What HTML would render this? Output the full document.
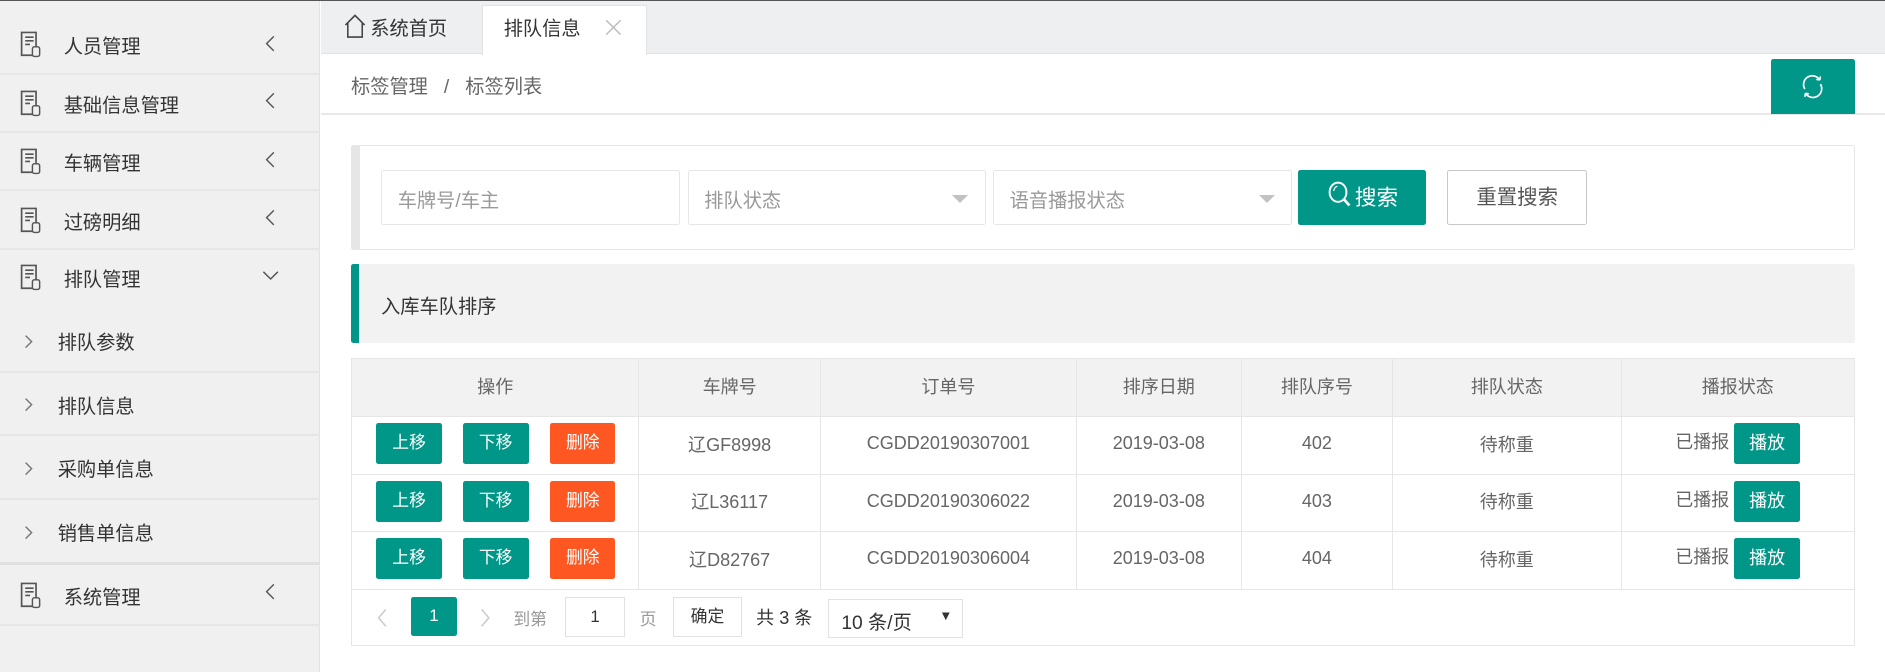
<!DOCTYPE html>
<html><head><meta charset="utf-8">
<style>
*{box-sizing:border-box;margin:0;padding:0}
html,body{width:1885px;height:672px;overflow:hidden;background:#fff}
#w{zoom:1.2022;width:1568px;height:559px;position:relative;font-family:"Liberation Sans","Noto Sans CJK SC",sans-serif;color:#333;font-size:15px}
.a{position:absolute}
.side{left:0;top:1px;width:266px;height:558px;background:#f0f0f0;border-right:1px solid #e2e2e2}
.it{position:absolute;left:0;width:266px;border-bottom:2px solid #e6e6e6;font-size:16px;color:#333}
.it span{position:absolute;left:53px}
.it .ch{position:absolute;left:219px}
.ic{position:absolute;left:15px;width:20px;height:24px}
.sub span{left:48px}
.sub .ch{left:18px}
.inp{border:1px solid #e6e6e6;background:#fff;height:46px;top:141px;color:#999;padding:12px 0 0 13px;font-size:16px;border-radius:2px}
.tri{position:absolute;right:14px;top:20px;border:7px solid transparent;border-top:7px solid #c2c2c2}
.btn{color:#fff;background:#009688;text-align:center;border-radius:2px}
table{border-collapse:collapse;position:absolute;left:292px;top:298px;width:1251px;color:#666;font-size:15px}
td,th{border:1px solid #e6e6e6;text-align:center;font-weight:normal;height:48px;padding:0 0 3px 0}
th{background:#f2f2f2}
.sb{display:inline-block;width:55px;height:34px;line-height:34px;color:#fff;background:#009688;font-size:14px;border-radius:2px;margin:0 7px;text-align:center;vertical-align:middle}
.del{background:#ff5722;width:54px}
</style></head><body><div id="w">
<div class="a" style="left:0;top:0;width:1568px;height:1px;background:#555"></div>
<svg width="0" height="0" style="position:absolute"><defs>
<g id="doc"><path d="M3 2h12v19H3z M6 6h7 M6 9h7 M6 12h4" fill="none" stroke="#555" stroke-width="1.4"/><rect x="12" y="14" width="6" height="8" rx="1.5" fill="#f0f0f0" stroke="#555" stroke-width="1.2"/></g>
<path id="lt" d="M9 2L3 8l6 6" fill="none" stroke="#555" stroke-width="1.2"/>
<path id="dn" d="M2 4l6 6 6-6" fill="none" stroke="#555" stroke-width="1.2"/>
<path id="rt" d="M3 3l5 5-5 5" fill="none" stroke="#777" stroke-width="1.2"/>
</defs></svg>
<div class="a side">
<div class="it" style="top:13px;height:48px"><svg class="ic" style="top:11px"><use href="#doc"/></svg><span style="top:12px">人员管理</span><svg class="ch" width="12" height="16" style="top:14px"><use href="#lt"/></svg></div>
<div class="it" style="top:61px;height:49px"><svg class="ic" style="top:12px"><use href="#doc"/></svg><span style="top:13px">基础信息管理</span><svg class="ch" width="12" height="16" style="top:14px"><use href="#lt"/></svg></div>
<div class="it" style="top:110px;height:48px"><svg class="ic" style="top:11px"><use href="#doc"/></svg><span style="top:12px">车辆管理</span><svg class="ch" width="12" height="16" style="top:14px"><use href="#lt"/></svg></div>
<div class="it" style="top:158px;height:49px"><svg class="ic" style="top:12px"><use href="#doc"/></svg><span style="top:13px">过磅明细</span><svg class="ch" width="12" height="16" style="top:14px"><use href="#lt"/></svg></div>
<div class="it" style="top:207px;height:50px;border:none"><svg class="ic" style="top:11px"><use href="#doc"/></svg><span style="top:12px">排队管理</span><svg class="ch" width="16" height="14" style="top:14px;left:217px"><use href="#dn"/></svg></div>
<div class="it sub" style="top:257px;height:52px"><svg class="ch" width="12" height="16" style="top:18px"><use href="#rt"/></svg><span style="top:14px">排队参数</span></div>
<div class="it sub" style="top:309px;height:53px"><svg class="ch" width="12" height="16" style="top:19px"><use href="#rt"/></svg><span style="top:15px">排队信息</span></div>
<div class="it sub" style="top:362px;height:53px"><svg class="ch" width="12" height="16" style="top:19px"><use href="#rt"/></svg><span style="top:15px">采购单信息</span></div>
<div class="it sub" style="top:415px;height:54px;border-bottom:3px solid #e0e0e0"><svg class="ch" width="12" height="16" style="top:19px"><use href="#rt"/></svg><span style="top:15px">销售单信息</span></div>
<div class="it" style="top:469px;height:51px"><svg class="ic" style="top:13px"><use href="#doc"/></svg><span style="top:14px">系统管理</span><svg class="ch" width="12" height="16" style="top:14px"><use href="#lt"/></svg></div>
</div>
<div class="a" style="left:267px;top:1px;width:1301px;height:44px;background:#eeeff1;border-bottom:1px solid #e2e2e2"></div>
<svg class="a" style="left:285px;top:11px" width="20" height="22"><path d="M2 10L10 2l8 8M4 8v12h12V8" fill="none" stroke="#444" stroke-width="1.3"/></svg>
<div class="a" style="left:308px;top:11px;font-size:16px">系统首页</div>
<div class="a" style="left:401px;top:4px;width:137px;height:42px;background:#fff;border:1px solid #e2e2e2;border-bottom:none"></div>
<div class="a" style="left:419px;top:11px;font-size:16px">排队信息</div>
<svg class="a" style="left:503px;top:16px" width="14" height="14"><path d="M1 1l12 12M13 1L1 13" stroke="#bbb" stroke-width="1.2"/></svg>
<div class="a" style="left:267px;top:94px;width:1301px;height:2px;background:#e8e8e8"></div>
<div class="a" style="left:292px;top:59px;color:#666;font-size:16px">标签管理&nbsp;&nbsp;&nbsp;/&nbsp;&nbsp;&nbsp;标签列表</div>
<div class="a btn" style="left:1473px;top:49px;width:70px;height:46px;border-radius:2px 2px 0 0">
<svg width="26" height="26" style="margin-top:10px"><path d="M6.5 15A7 7 0 0 1 19 7.5M19.5 11A7 7 0 0 1 7 18.5" fill="none" stroke="#fff" stroke-width="1.4"/><path d="M19 7.5l0.5-3M19 7.5l-3-0.5M7 18.5l-0.5 3M7 18.5l3 0.5" stroke="#fff" stroke-width="1.3"/></svg></div>
<div class="a" style="left:292px;top:121px;width:1251px;height:87px;border:1px solid #e6e6e6;border-left:8px solid #e6e6e6;border-radius:2px"></div>
<div class="a inp" style="left:317px;width:249px">车牌号/车主</div>
<div class="a inp" style="left:572px;width:248px">排队状态<div class="tri"></div></div>
<div class="a inp" style="left:826px;width:249px">语音播报状态<div class="tri"></div></div>
<div class="a btn" style="left:1080px;top:141px;width:106px;height:46px;font-size:18px;line-height:46px"><svg width="24" height="26" style="vertical-align:-5px"><ellipse cx="10" cy="11" rx="7" ry="8" fill="none" stroke="#fff" stroke-width="1.6"/><path d="M15 17l4.5 5" stroke="#fff" stroke-width="2.2"/><path d="M6.5 10a4 4 0 0 1 3-4" stroke="#fff" fill="none" stroke-width="1"/></svg>搜索</div>
<div class="a" style="left:1204px;top:141px;width:116px;height:46px;border:1px solid #c9c9c9;border-radius:2px;text-align:center;line-height:46px;font-size:17px;color:#555">重置搜索</div>
<div class="a" style="left:292px;top:220px;width:1251px;height:65px;background:#f2f2f2;border-left:7px solid #009688;border-radius:2px"></div>
<div class="a" style="left:317px;top:242px;font-size:16px">入库车队排序</div>
<table>
<tr><th style="width:239px">操作</th><th style="width:151px">车牌号</th><th style="width:213px">订单号</th><th style="width:137px">排序日期</th><th style="width:126px">排队序号</th><th style="width:190px">排队状态</th><th>播报状态</th></tr>
<tr><td style="text-align:left;padding-left:13px"><span class="sb">上移</span><span class="sb" style="margin-left:10px">下移</span><span class="sb del" style="margin-left:11px">删除</span></td><td>辽GF8998</td><td>CGDD20190307001</td><td>2019-03-08</td><td>402</td><td>待称重</td><td>已播报<span class="sb" style="margin:0 0 0 4px;font-size:15px">播放</span></td></tr>
<tr><td style="text-align:left;padding-left:13px"><span class="sb">上移</span><span class="sb" style="margin-left:10px">下移</span><span class="sb del" style="margin-left:11px">删除</span></td><td>辽L36117</td><td>CGDD20190306022</td><td>2019-03-08</td><td>403</td><td>待称重</td><td>已播报<span class="sb" style="margin:0 0 0 4px;font-size:15px">播放</span></td></tr>
<tr><td style="text-align:left;padding-left:13px"><span class="sb">上移</span><span class="sb" style="margin-left:10px">下移</span><span class="sb del" style="margin-left:11px">删除</span></td><td>辽D82767</td><td>CGDD20190306004</td><td>2019-03-08</td><td>404</td><td>待称重</td><td>已播报<span class="sb" style="margin:0 0 0 4px;font-size:15px">播放</span></td></tr>
</table>
<div class="a" style="left:292px;top:488px;width:1251px;height:49px;border:1px solid #e6e6e6;border-top:none"></div>
<svg class="a" style="left:312px;top:505px" width="12" height="18"><path d="M9 2L3 9l6 7" fill="none" stroke="#ccc" stroke-width="1.3"/></svg>
<div class="a btn" style="left:342px;top:497px;width:38px;height:32px;line-height:32px;font-size:14px">1</div>
<svg class="a" style="left:398px;top:505px" width="12" height="18"><path d="M3 2l6 7-6 7" fill="none" stroke="#ccc" stroke-width="1.3"/></svg>
<div class="a" style="left:427px;top:503px;font-size:14px;color:#999">到第</div>
<div class="a" style="left:470px;top:497px;width:50px;height:33px;border:1px solid #e2e2e2;text-align:center;line-height:31px;font-size:14px">1</div>
<div class="a" style="left:532px;top:503px;font-size:14px;color:#999">页</div>
<div class="a" style="left:560px;top:497px;width:57px;height:33px;border:1px solid #e2e2e2;text-align:center;line-height:31px;font-size:14px">确定</div>
<div class="a" style="left:629px;top:502px;font-size:15px">共 3 条</div>
<div class="a" style="left:689px;top:498px;width:112px;height:33px;border:1px solid #e2e2e2;padding:6px 0 0 10px;font-size:16px">10 条/页<span style="position:absolute;right:8px;top:7px;font-size:11px">&#x25BC;</span></div>
</div></body></html>
